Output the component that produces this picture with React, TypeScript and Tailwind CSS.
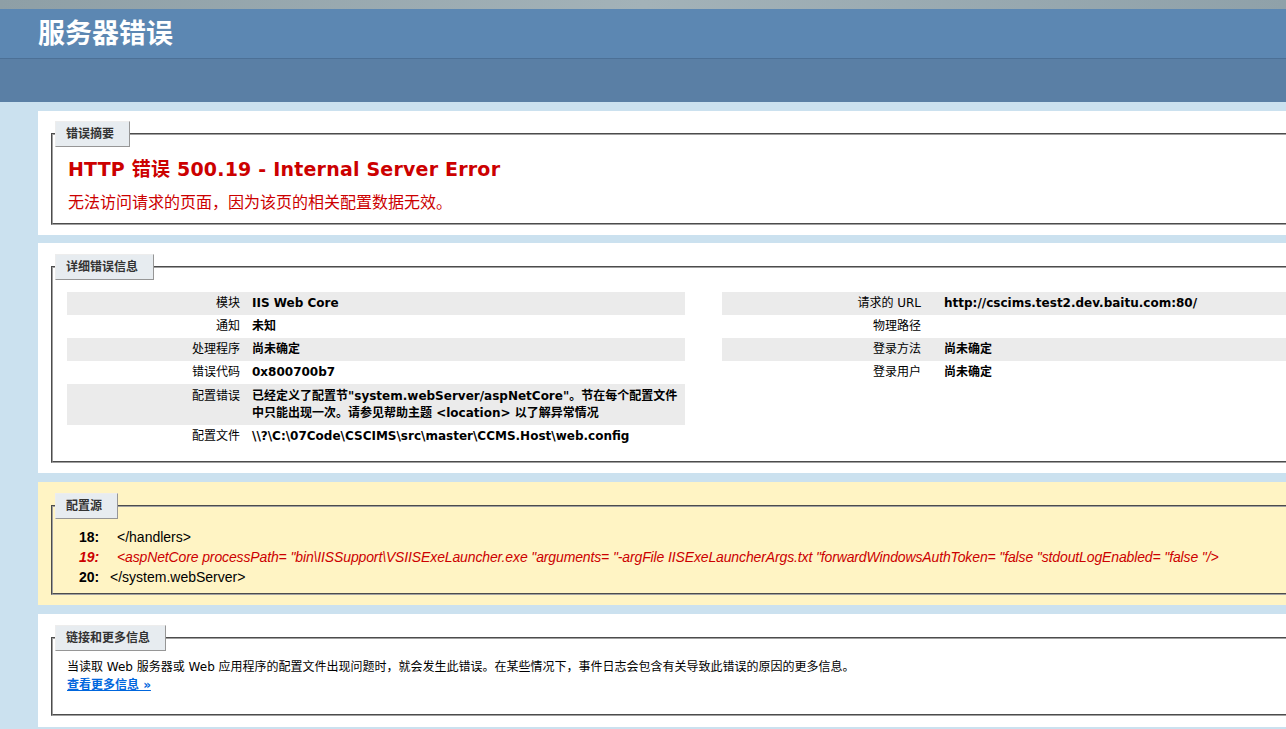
import React from "react";

const F = { fontFamily: '"DejaVu Sans","Noto Sans CJK SC",sans-serif' };

function Legend({ children }: { children: React.ReactNode }) {
  return (
    <div className="-mt-[14px] ml-[2px] self-start bg-[#e7ecf0] border border-t-[#ededed] border-l-[#ededed] border-r-[#969696] border-b-[#969696] py-[4px] pl-[10px] pr-[15px] text-[12px] leading-[16px] font-bold text-[#333333]">
      {children}
    </div>
  );
}

function Fieldset({ children, pb }: { children: React.ReactNode; pb: string }) {
  return (
    <div className={`mt-[12px] flex flex-col border-2 [border-style:groove] border-[#a0a0a0] ${pb}`}>
      {children}
    </div>
  );
}

type Row = { k: string; v: React.ReactNode; alt: boolean; tall?: boolean };

const leftRows: Row[] = [
  { k: "模块", v: "IIS Web Core", alt: true },
  { k: "通知", v: "未知", alt: false },
  { k: "处理程序", v: "尚未确定", alt: true },
  { k: "错误代码", v: "0x800700b7", alt: false },
  {
    k: "配置错误",
    v: (
      <>
        已经定义了配置节"system.webServer/aspNetCore"。节在每个配置文件
        <br />
        中只能出现一次。请参见帮助主题 &lt;location&gt; 以了解异常情况
      </>
    ),
    alt: true,
    tall: true,
  },
  { k: "配置文件", v: "\\\\?\\C:\\07Code\\CSCIMS\\src\\master\\CCMS.Host\\web.config", alt: false },
];

const rightRows: Row[] = [
  { k: "请求的 URL", v: "http://cscims.test2.dev.baitu.com:80/", alt: true },
  { k: "物理路径", v: "", alt: false },
  { k: "登录方法", v: "尚未确定", alt: true },
  { k: "登录用户", v: "尚未确定", alt: false },
];

export default function App() {
  return (
    <div className="w-[1286px] h-[729px] overflow-hidden bg-[#cbe1ef] text-black" style={F}>
      <div className="h-[9px] bg-gradient-to-r from-[#8e9fa6] via-[#a3b2b8] to-[#8fa1a9]" />
      <div className="h-[49px] bg-[#5c87b2] flex items-center pl-[38px]">
        <h1 className="text-white text-[27px] leading-[30px] font-bold">服务器错误</h1>
      </div>
      <div className="h-[44px] bg-[#5a7fa5] border-t border-[#4c7096]" />

      <div className="pl-[38px] pt-[9px] flex flex-col">
        {/* Panel 1 */}
        <div className="w-[1280px] bg-white pt-[10px] pb-[10px] pl-[13px]">
          <Fieldset pb="pb-[9px]">
            <Legend>错误摘要</Legend>
            <div className="pl-[15px]">
              <div className="mt-[11px] text-[#cc0000] text-[19px] leading-[22px] font-bold whitespace-nowrap tracking-[0.2px]">
                HTTP 错误 500.19 - Internal Server Error
              </div>
              <div className="mt-[12px] text-[#cc0000] text-[16px] leading-[22px]">
                无法访问请求的页面，因为该页的相关配置数据无效。
              </div>
            </div>
          </Fieldset>
        </div>

        {/* Panel 2 */}
        <div className="mt-[8px] w-[1280px] bg-white pt-[11px] pb-[10px] pl-[13px]">
          <Fieldset pb="pb-[13px]">
            <Legend>详细错误信息</Legend>
            <div className="mt-[12px] pl-[14px] flex items-start text-[12px] leading-[17px]">
              <div className="w-[618px] shrink-0 flex flex-col">
                {leftRows.map((r) => (
                  <div
                    key={r.k}
                    className={`flex ${r.alt ? "bg-[#ebebeb]" : ""} ${r.tall ? "py-[3.5px]" : "py-[3px]"}`}
                  >
                    <div className="w-[179px] shrink-0 text-right pr-[6px]">{r.k}</div>
                    <div className="pl-[6px] font-bold whitespace-nowrap">{r.v}</div>
                  </div>
                ))}
              </div>
              <div className="ml-[37px] w-[620px] shrink-0 flex flex-col">
                {rightRows.map((r) => (
                  <div key={r.k} className={`flex py-[3px] ${r.alt ? "bg-[#ebebeb]" : ""}`}>
                    <div className="w-[210px] shrink-0 text-right pr-[11px]">{r.k}</div>
                    <div className="pl-[12px] font-bold whitespace-nowrap min-h-[17px]">{r.v}</div>
                  </div>
                ))}
              </div>
            </div>
          </Fieldset>
        </div>

        {/* Panel 3 */}
        <div className="mt-[9px] w-[1280px] bg-[#fff4c4] pt-[11px] pb-[10px] pl-[13px]">
          <Fieldset pb="pb-[6px]">
            <Legend>配置源</Legend>
            <div
              className="mt-[8px] pl-[26px] text-[14px] leading-[20px] whitespace-nowrap"
              style={{ fontFamily: '"Liberation Sans","Noto Sans CJK SC",sans-serif' }}
            >
              <div className="flex">
                <span className="w-[38px] font-bold">18:</span>
                <span>&lt;/handlers&gt;</span>
              </div>
              <div className="flex italic text-[#cc0000]">
                <span className="w-[38px] font-bold">19:</span>
                <span className="tracking-[-0.13px]">
                  &lt;aspNetCore processPath= "bin\IISSupport\VSIISExeLauncher.exe "arguments= "-argFile
                  IISExeLauncherArgs.txt "forwardWindowsAuthToken= "false "stdoutLogEnabled= "false "/&gt;
                </span>
              </div>
              <div className="flex">
                <span className="w-[31px] font-bold">20:</span>
                <span>&lt;/system.webServer&gt;</span>
              </div>
            </div>
          </Fieldset>
        </div>

        {/* Panel 4 */}
        <div className="mt-[9px] w-[1280px] bg-white pt-[11px] pb-[11px] pl-[13px]">
          <Fieldset pb="pb-[20px]">
            <Legend>链接和更多信息</Legend>
            <div className="mt-[7px] pl-[14px] text-[12px] leading-[18px]">
              <div>
                当读取 Web 服务器或 Web 应用程序的配置文件出现问题时，就会发生此错误。在某些情况下，事件日志会包含有关导致此错误的原因的更多信息。
              </div>
              <a href="#" className="font-bold text-[#0066dd] underline">
                查看更多信息 »
              </a>
            </div>
          </Fieldset>
        </div>
      </div>
    </div>
  );
}
